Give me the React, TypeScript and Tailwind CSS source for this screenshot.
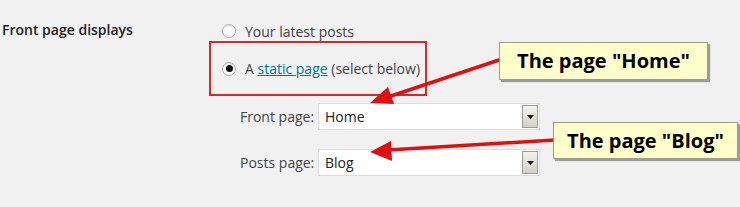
import React from "react";

const Radio = ({ checked }: { checked?: boolean }) => (
  <span className="flex h-[14px] w-[14px] items-center justify-center rounded-full border border-[#a9adb2] bg-white shadow-[inset_0_1px_2px_rgba(0,0,0,0.15)]">
    {checked && <span className="h-[7px] w-[7px] rounded-full bg-[#111]" />}
  </span>
);

const Select = ({ value }: { value: string }) => (
  <div className="flex h-[27px] w-[222px] items-stretch border border-[#dcdcdc] bg-white">
    <span className="flex flex-1 items-center pl-[6px] text-[14px] text-[#222]">{value}</span>
    <span className="my-[1px] mr-[1px] flex w-[16px] items-center justify-center border border-[#9a9a9a] bg-gradient-to-b from-[#f4f3ee] to-[#d4d0c8]">
      <svg width="7" height="4" viewBox="0 0 7 4">
        <path d="M0 0h7L3.5 4z" fill="#111" />
      </svg>
    </span>
  </div>
);

const Callout = ({ text, className }: { text: string; className: string }) => (
  <div
    className={`absolute flex items-center justify-center border border-[#9c9c8c] bg-[#ffffcc] text-[20px] font-bold text-black shadow-[2px_2px_1px_rgba(0,0,0,0.35)] ${className}`}
  >
    {text}
  </div>
);

export default function App() {
  return (
    <div className="relative h-[207px] w-[740px] overflow-hidden bg-[#f1f1f1] font-['Open_Sans',sans-serif] text-[14px] text-[#444]">
      <div className="flex">
        <div className="w-[209px] pl-[2px] pt-[19px] text-[14px] font-semibold text-[#222]">Front page displays</div>
        <div className="flex flex-col pt-[21px]">
          <label className="flex h-[20px] items-center gap-[9px] pl-[13px]">
            <Radio />
            <span>Your latest posts</span>
          </label>
          <div className="flex h-[55px] w-[218px] items-center gap-[9px] border-2 border-[#d42a2a] pl-[11px]">
            <Radio checked />
            <span>
              A <a className="text-[#0073aa] underline">static page</a> (select below)
            </span>
          </div>
          <div className="mt-[7px] flex flex-col gap-[19px] pl-[31px]">
            <div className="flex items-center">
              <span className="w-[78px]">Front page:</span>
              <Select value="Home" />
            </div>
            <div className="flex items-center">
              <span className="w-[78px]">Posts page:</span>
              <Select value="Blog" />
            </div>
          </div>
        </div>
      </div>

      <svg className="absolute left-0 top-0" width="740" height="207" viewBox="0 0 740 207">
        <line x1="502" y1="59" x2="385" y2="98" stroke="#e01010" strokeWidth="3.5" />
        <path d="M370 103 L388 87 L394 104 Z" fill="#e01010" />
        <line x1="555" y1="140" x2="388" y2="150" stroke="#e01010" strokeWidth="3.5" />
        <path d="M370 152 L391 141 L392 161 Z" fill="#e01010" />
      </svg>

      <Callout text={'The page "Home"'} className="left-[499px] top-[42px] h-[38px] w-[209px]" />
      <Callout text={'The page "Blog"'} className="left-[553px] top-[122px] h-[37px] w-[185px]" />
    </div>
  );
}
